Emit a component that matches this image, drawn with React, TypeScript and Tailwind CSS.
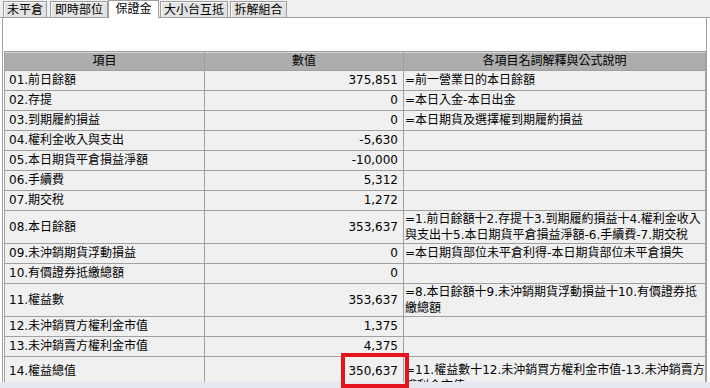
type Row = {
  label: string
  value: string
  note: string[]
  height: string
  leading: string
  top?: boolean
}

const tabs = [
  { name: '未平倉', cls: 'ml-0 w-[44px]' },
  { name: '即時部位', cls: 'ml-[3px] w-[58px]' },
  { name: '保證金', cls: 'ml-0 w-[51px]', active: true },
  { name: '大小台互抵', cls: 'ml-[1px] w-[68px]' },
  { name: '拆解組合', cls: 'ml-[2px] w-[57px]' },
]

const rows: Row[] = [
  { label: '01.前日餘額', value: '375,851', note: ['=前一營業日的本日餘額'], height: 'h-[20px]', leading: 'leading-[19px]' },
  { label: '02.存提', value: '0', note: ['=本日入金-本日出金'], height: 'h-[20px]', leading: 'leading-[19px]' },
  { label: '03.到期履約損益', value: '0', note: ['=本日期貨及選擇權到期履約損益'], height: 'h-[20px]', leading: 'leading-[19px]' },
  { label: '04.權利金收入與支出', value: '-5,630', note: [], height: 'h-[20px]', leading: 'leading-[19px]' },
  { label: '05.本日期貨平倉損益淨額', value: '-10,000', note: [], height: 'h-[20px]', leading: 'leading-[19px]' },
  { label: '06.手續費', value: '5,312', note: [], height: 'h-[20px]', leading: 'leading-[19px]' },
  { label: '07.期交稅', value: '1,272', note: [], height: 'h-[20px]', leading: 'leading-[19px]' },
  {
    label: '08.本日餘額',
    value: '353,637',
    note: ['=1.前日餘額十2.存提十3.到期履約損益十4.權利金收入', '與支出十5.本日期貨平倉損益淨額-6.手續費-7.期交稅'],
    height: 'h-[33px]',
    leading: 'leading-[16px]',
  },
  { label: '09.未沖銷期貨浮動損益', value: '0', note: ['=本日期貨部位未平倉利得-本日期貨部位未平倉損失'], height: 'h-[20px]', leading: 'leading-[19px]' },
  { label: '10.有價證券抵繳總額', value: '0', note: [], height: 'h-[20px]', leading: 'leading-[19px]' },
  {
    label: '11.權益數',
    value: '353,637',
    note: ['=8.本日餘額十9.未沖銷期貨浮動損益十10.有價證券抵', '繳總額'],
    height: 'h-[33px]',
    leading: 'leading-[16px]',
  },
  { label: '12.未沖銷買方權利金市值', value: '1,375', note: [], height: 'h-[20px]', leading: 'leading-[19px]' },
  { label: '13.未沖銷賣方權利金市值', value: '4,375', note: [], height: 'h-[20px]', leading: 'leading-[19px]' },
  {
    label: '14.權益總值',
    value: '350,637',
    note: ['=11.權益數十12.未沖銷買方權利金市值-13.未沖銷賣方', '權利金市值'],
    height: 'h-[40px]',
    leading: 'leading-[16px]',
    top: true,
  },
]

function Tabs() {
  return (
    <div className="flex h-[18px] items-end border-b border-[#a0a0a0] bg-[#f0f0f0] pl-[3px]">
      {tabs.map((t) =>
        t.active ? (
          <div
            key={t.name}
            className={`${t.cls} relative -mb-px flex h-[18px] items-start justify-center border-x border-t border-[#a0a0a0] bg-white pt-px leading-[14px]`}
          >
            {t.name}
          </div>
        ) : (
          <div
            key={t.name}
            className={`${t.cls} flex h-[16px] items-center justify-center border-x border-t border-[#9c9c9c] bg-[#e3e3e3] leading-[14px] shadow-[inset_1px_1px_0_#fafafa]`}
          >
            {t.name}
          </div>
        ),
      )}
    </div>
  )
}

function MarginRow({ row }: { row: Row }) {
  const align = row.top ? 'items-start pt-[5px]' : 'items-center'
  return (
    <div className={`flex ${row.height} border-b border-[#a0a0a0] bg-[#f0f0f0]`}>
      <div className={`flex w-[200px] shrink-0 ${align} border-r border-[#a0a0a0] pl-[4px] leading-[19px]`}>
        {row.label}
      </div>
      <div className={`flex w-[199px] shrink-0 ${align} justify-end border-r border-[#a0a0a0] pr-[5px] leading-[19px]`}>
        {row.value}
      </div>
      <div className={`flex flex-1 flex-col ${row.top ? 'justify-start pt-[5px]' : 'justify-center'} whitespace-nowrap pl-px ${row.leading}`}>
        {row.note.map((line) => (
          <div key={line}>{line}</div>
        ))}
      </div>
    </div>
  )
}

export default function App() {
  return (
    <div className="relative h-[388px] w-[710px] overflow-hidden bg-white font-['DejaVu_Sans','Noto_Sans_CJK_TC',sans-serif] text-[12px] text-black">
      <Tabs />

      {/* scroll panel, last row is cut at the bottom */}
      <div className="ml-[2px] h-[364px] w-[705px] overflow-hidden border-x border-[#a0a0a0]">
        <div className="ml-px mt-[33px] w-[702px] border-x border-t border-[#a0a0a0]">
          <div className="flex h-[19px] border-b border-[#a0a0a0] bg-[#adadad] leading-[18px] shadow-[inset_0_1px_0_#d6d6d6]">
            <div className="w-[200px] shrink-0 border-r border-[#a0a0a0] text-center">項目</div>
            <div className="w-[199px] shrink-0 border-r border-[#a0a0a0] text-center">數值</div>
            <div className="flex-1 text-center">各項目名詞解釋與公式說明</div>
          </div>
          {rows.map((r) => (
            <MarginRow key={r.label} row={r} />
          ))}
        </div>
      </div>

      {/* bottom strip */}
      <div className="h-[6px] w-full bg-[#e3e9ef]" />

      {/* highlight */}
      <div className="absolute left-[341px] top-[353px] h-[35px] w-[68px] border-4 border-[#e3141d]" />
    </div>
  )
}
